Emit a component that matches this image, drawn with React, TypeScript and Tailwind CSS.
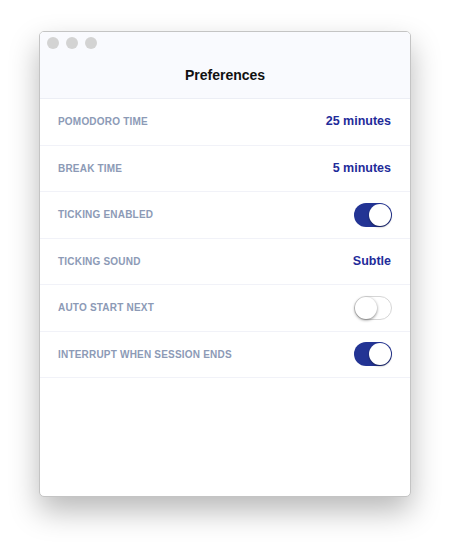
import React from "react";

type Row =
  | { label: string; kind: "value"; value: string }
  | { label: string; kind: "toggle"; on: boolean };

const rows: Row[] = [
  { label: "Pomodoro Time", kind: "value", value: "25 minutes" },
  { label: "Break Time", kind: "value", value: "5 minutes" },
  { label: "Ticking Enabled", kind: "toggle", on: true },
  { label: "Ticking Sound", kind: "value", value: "Subtle" },
  { label: "Auto Start Next", kind: "toggle", on: false },
  { label: "Interrupt When Session Ends", kind: "toggle", on: true },
];

function Toggle({ on }: { on: boolean }) {
  return (
    <div
      className={
        on
          ? "flex h-[24px] w-[38px] items-center justify-end rounded-full bg-[#233494] p-[1px]"
          : "flex h-[24px] w-[38px] items-center justify-start rounded-full border border-[#d6d6d6] bg-white"
      }
    >
      <div
        className={
          on
            ? "h-[22px] w-[22px] rounded-full bg-white shadow-[0_1px_2px_rgba(0,0,0,0.45)]"
            : "h-[22px] w-[22px] rounded-full bg-white shadow-[0_1px_3px_rgba(0,0,0,0.5)]"
        }
      />
    </div>
  );
}

export default function App() {
  return (
    <div className="flex h-[543px] w-[450px] bg-white pl-[39px] pt-[31px] font-['Helvetica','Liberation_Sans',sans-serif]">
      <div className="flex h-[466px] w-[372px] flex-col overflow-hidden rounded-[5px] border border-[#c4c4c4] bg-white shadow-[0_14px_30px_rgba(0,0,0,0.28)]">
        <div className="flex h-[67px] flex-col border-b border-[#eceef5] bg-[#f9fafe]">
          <div className="flex gap-[7px] pl-[7px] pt-[5px]">
            <span className="h-[12px] w-[12px] rounded-full bg-[#d3d3d3]" />
            <span className="h-[12px] w-[12px] rounded-full bg-[#d3d3d3]" />
            <span className="h-[12px] w-[12px] rounded-full bg-[#d3d3d3]" />
          </div>
          <div className="mt-[16px] text-center text-[14px] font-semibold text-[#111]">
            Preferences
          </div>
        </div>
        {rows.map((r) => (
          <div
            key={r.label}
            className="flex h-[46.5px] shrink-0 items-center justify-between border-b border-[#f1f2f8] pl-[18px] pr-[18px]"
          >
            <span className="text-[10px] font-semibold uppercase tracking-[0.2px] text-[#8c9ab6]">
              {r.label}
            </span>
            {r.kind === "value" ? (
              <span className="pr-[1px] text-[12.5px] font-semibold text-[#1f2c9a]">
                {r.value}
              </span>
            ) : (
              <Toggle on={r.on} />
            )}
          </div>
        ))}
      </div>
    </div>
  );
}
